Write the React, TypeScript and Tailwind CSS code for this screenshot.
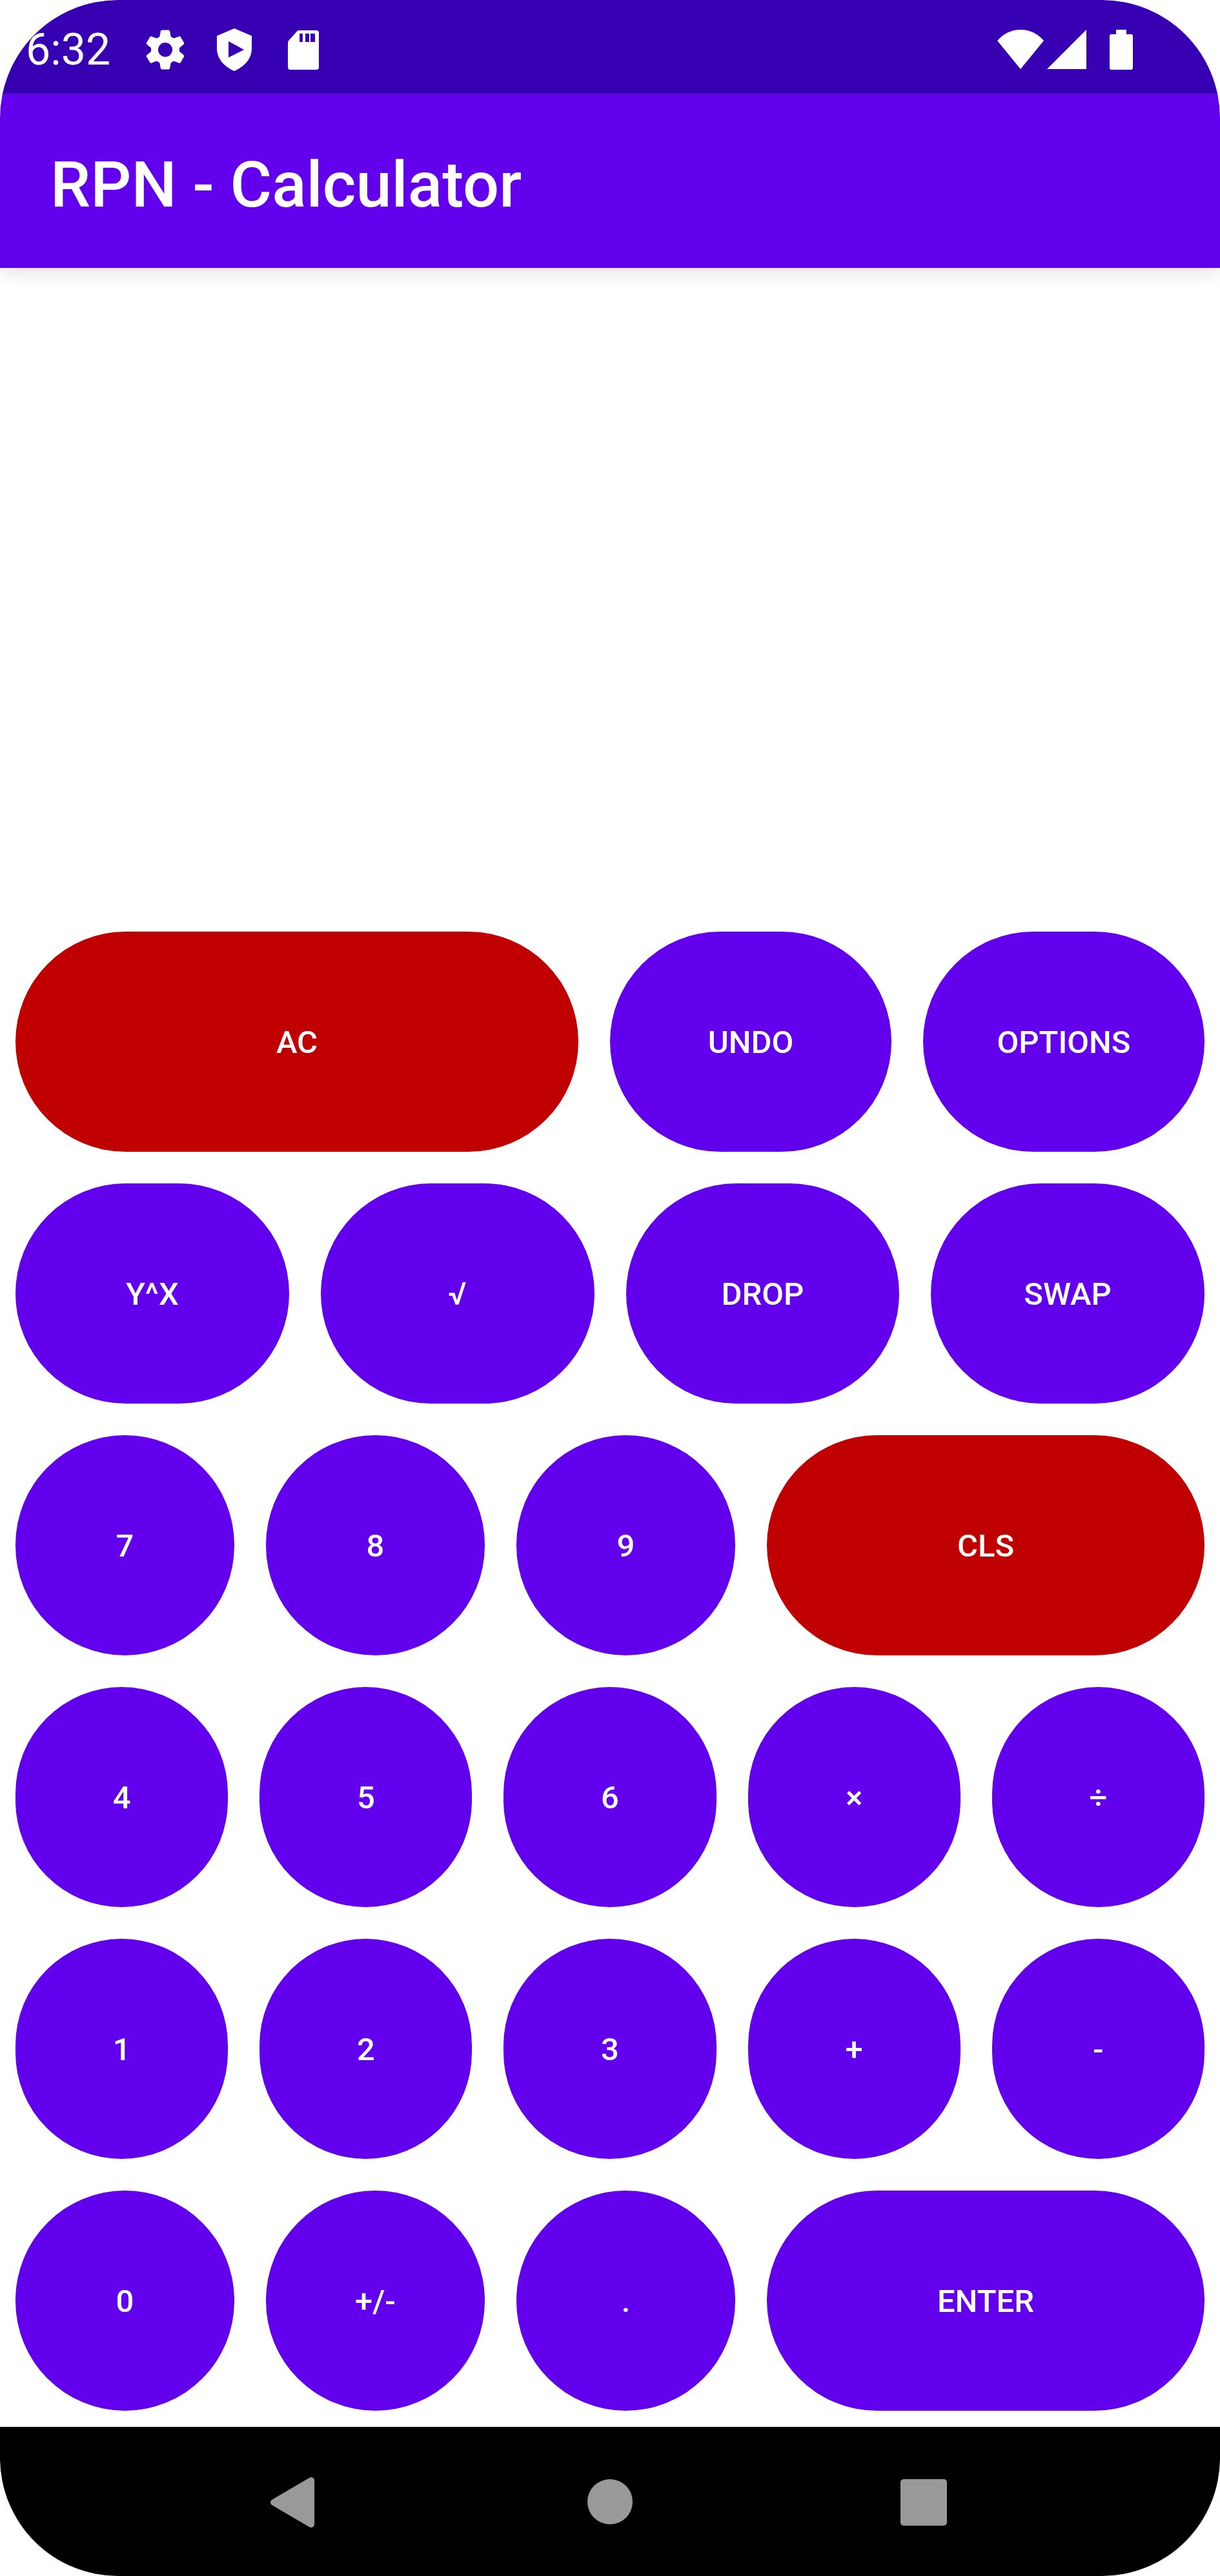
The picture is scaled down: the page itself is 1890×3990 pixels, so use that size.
type Key = { label: string; wide?: boolean; danger?: boolean };

const rows: Key[][] = [
  [{ label: "AC", wide: true, danger: true }, { label: "UNDO" }, { label: "OPTIONS" }],
  [{ label: "Y^X" }, { label: "√" }, { label: "DROP" }, { label: "SWAP" }],
  [{ label: "7" }, { label: "8" }, { label: "9" }, { label: "CLS", wide: true, danger: true }],
  [{ label: "4" }, { label: "5" }, { label: "6" }, { label: "×" }, { label: "÷" }],
  [{ label: "1" }, { label: "2" }, { label: "3" }, { label: "+" }, { label: "-" }],
  [{ label: "0" }, { label: "+/-" }, { label: "." }, { label: "ENTER", wide: true }],
];

function GearIcon() {
  return (
    <svg viewBox="0 0 72 72" className="size-[72px]" aria-hidden="true">
      <mask id="gear-hole">
        <rect width="72" height="72" fill="white" />
        <circle cx="36" cy="36" r="11" fill="black" />
      </mask>
      <g fill="currentColor" mask="url(#gear-hole)">
        <circle cx="36" cy="36" r="22" />
        {[0, 60, 120, 180, 240, 300].map((angle) => (
          <path
            key={angle}
            d="M31 5.500H41Q43 5.500 43.200 7.500L44.500 15 47 20H25L27.500 15 28.800 7.500Q29 5.500 31 5.500Z"
            transform={`rotate(${angle} 36 36)`}
          />
        ))}
      </g>
    </svg>
  );
}

function StatusBar() {
  return (
    <div className="flex h-[145px] items-center justify-between bg-[#3700b3] pt-2 pr-[135px] pl-10 text-white">
      <div className="flex items-center">
        <span className="w-[180px] text-[68px] leading-none">6:32</span>
        <div className="flex items-center gap-[35px]">
          <GearIcon />
          <svg viewBox="0 0 72 72" className="size-[72px]" fill="currentColor" aria-hidden="true">
            <path
              fillRule="evenodd"
              d="M36 3 63 14.500V34C63 50 52 62 36 69 20 62 9 50 9 34V14.500ZM27 23V48L51 36Z"
            />
          </svg>
          <svg viewBox="0 0 72 72" className="size-[72px]" fill="currentColor" aria-hidden="true">
            <path
              fillRule="evenodd"
              d="M29 6H56Q60 6 60 10V63Q60 67 56 67H16Q12 67 12 63V25Q12 23 13.500 21.500L26 7.500Q27 6 29 6ZM30 11V24H35V11ZM39 11V24H45V11ZM47 11V24H54V11Z"
            />
          </svg>
        </div>
      </div>
      <div className="flex items-center">
        <svg viewBox="0 0 72 62" className="h-[62px] w-[72px]" fill="currentColor" aria-hidden="true">
          <path d="M36 61 0 17Q15 0 36 0t36 17Z" />
        </svg>
        <svg viewBox="0 0 62 62" className="ml-[5px] size-[62px]" fill="currentColor" aria-hidden="true">
          <path d="M0 61H61V0Z" />
        </svg>
        <svg viewBox="0 0 36 62" className="ml-[35px] h-[62px] w-9" fill="currentColor" aria-hidden="true">
          <path d="M10 0H26V7H33Q36 7 36 10V59Q36 62 33 62H3Q0 62 0 59V10Q0 7 3 7H10Z" />
        </svg>
      </div>
    </div>
  );
}

function NavigationBar() {
  return (
    <nav className="flex h-[231px] items-center justify-center gap-[390px] bg-black text-[#999999]">
      <button type="button" aria-label="Back" className="size-24">
        <svg viewBox="0 0 96 96" fill="currentColor" stroke="currentColor" strokeWidth="10" strokeLinejoin="round">
          <path d="M71 15V83L13 49Z" />
        </svg>
      </button>
      <button type="button" aria-label="Home" className="size-24">
        <svg viewBox="0 0 96 96" fill="currentColor">
          <circle cx="48" cy="48" r="35" />
        </svg>
      </button>
      <button type="button" aria-label="Recent apps" className="size-24">
        <svg viewBox="0 0 96 96" fill="currentColor">
          <rect x="12" y="13" width="72" height="72" rx="5" />
        </svg>
      </button>
    </nav>
  );
}

export default function App() {
  return (
    <div className="min-h-screen bg-white font-['Roboto',sans-serif]">
      <div className="flex min-h-screen flex-col overflow-hidden rounded-[183px] bg-white">
        <StatusBar />
        <header className="flex h-[270px] items-center bg-[#6200ee] pt-3 pl-[78px] shadow-[0_8px_28px_rgba(0,0,0,0.11)]">
          <h1 className="text-[99px] leading-none font-medium text-white">RPN - Calculator</h1>
        </header>
        <output className="block flex-1" aria-label="Stack" />
        <main className="flex flex-col gap-[49px] px-6 py-[25px]">
          {rows.map((row, i) => (
            <div key={i} className="flex gap-[49px]">
              {row.map((key) => (
                <button
                  key={key.label}
                  type="button"
                  className={`h-[341px] min-w-0 basis-0 rounded-full pt-0.5 text-[49px] leading-none font-medium text-white ${
                    key.wide ? "grow-2" : "grow"
                  } ${key.danger ? "bg-[#c00000]" : "bg-[#6200ee]"}`}
                >
                  {key.label}
                </button>
              ))}
            </div>
          ))}
        </main>
        <NavigationBar />
      </div>
    </div>
  );
}
